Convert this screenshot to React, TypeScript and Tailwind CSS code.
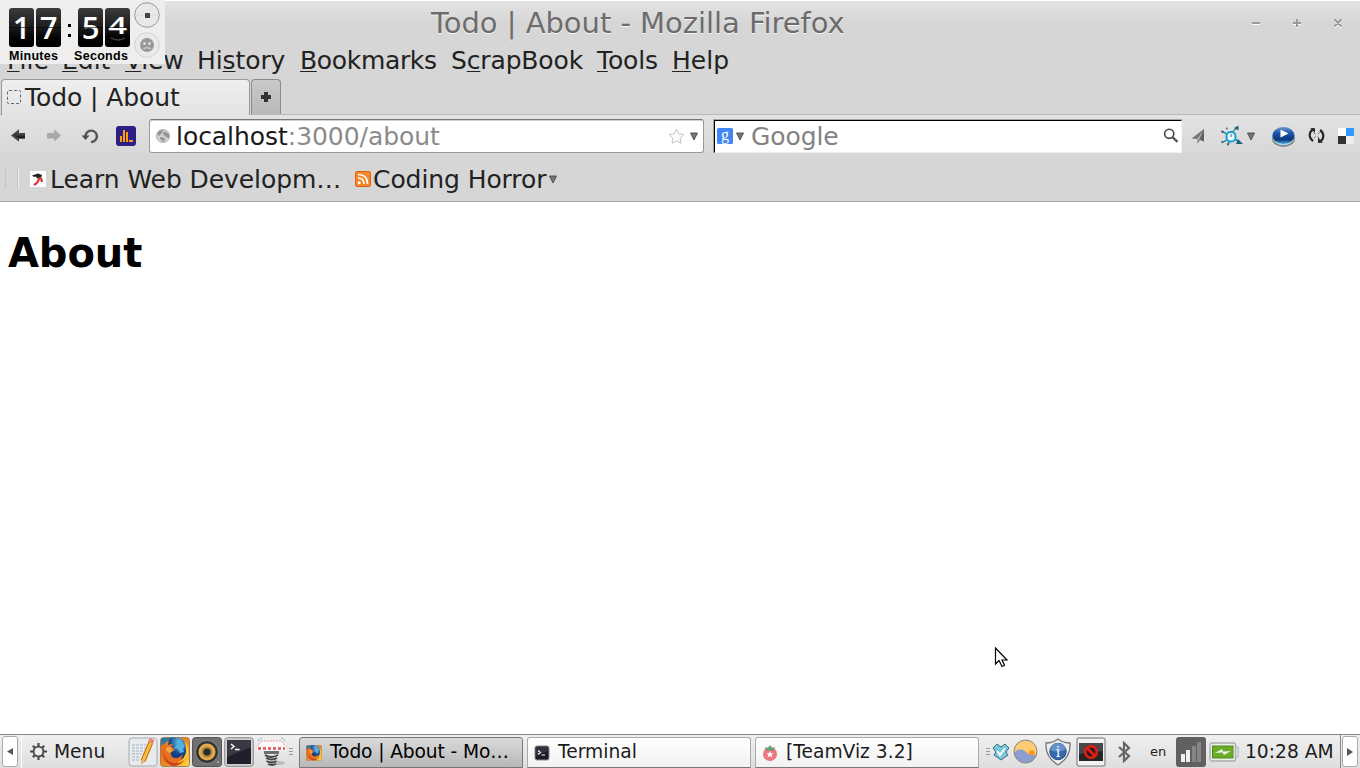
import type { ReactNode } from "react";

function Digit({ value, flipping }: { value: string; flipping?: boolean }) {
  return (
    <div className="relative flex h-[39px] w-[25px] items-center justify-center rounded-[3px] bg-linear-to-b from-[#3c3c3c] via-[#1c1c1c] to-black">
      {flipping ? (
        <span className="-mt-[5px] scale-x-110 scale-y-80 font-['Open_Sans',sans-serif] text-[30px] leading-[38px] font-semibold text-white">
          {value}
        </span>
      ) : (
        <span className="-mt-[1px] font-['Open_Sans',sans-serif] text-[31px] leading-[39px] font-semibold text-white">
          {value}
        </span>
      )}
      {flipping && (
        <svg className="absolute bottom-[4px] left-[4px]" width="18" height="6" viewBox="0 0 18 6">
          <path d="M2 1q7 4 14 0" stroke="#4a4a4a" strokeWidth="1.4" fill="none" />
        </svg>
      )}
      <div className="absolute inset-x-0 top-[19px] h-px bg-black/60" />
    </div>
  );
}

function Timer() {
  return (
    <div className="absolute top-0 left-0 z-10 h-[64px] w-[165px] bg-[#eeeeee]">
      <div className="flex pt-[8px] pl-[9px]">
        <div className="flex gap-[2px]">
          <Digit value="1" />
          <Digit value="7" />
        </div>
        <div className="flex w-[17px] flex-col items-center gap-[7px] pt-[16px]">
          <i className="h-[3px] w-[3px] bg-black" />
          <i className="h-[3px] w-[3px] bg-black" />
        </div>
        <div className="flex gap-[2px]">
          <Digit value="5" />
          <Digit value="4" flipping />
        </div>
      </div>
      <div className="flex pl-[9px] font-['Liberation_Sans',sans-serif] text-[12.5px] leading-[18px] font-bold tracking-[0.3px] text-black">
        <span className="w-[65px]">Minutes</span>
        <span>Seconds</span>
      </div>
      <svg className="absolute top-0 left-[133px]" width="28" height="60" viewBox="0 0 28 60">
        <circle cx="14" cy="15" r="12.3" fill="#e8e8e8" stroke="#999" />
        <path d="M2 15.500H26" stroke="#ddd" />
        <rect x="12" y="13" width="5" height="5" fill="#444" />
        <circle cx="14" cy="45" r="12.3" fill="#eaeaea" stroke="#d3d3d3" />
        <circle cx="14" cy="45" r="7" fill="#999" />
        <path d="M10.500 48.500q3.500-1.500 7 0" stroke="#e0e0e0" strokeWidth="1.100" fill="none" />
        <circle cx="11.500" cy="43.500" r="1.200" fill="#eee" />
        <circle cx="16.500" cy="43.500" r="1.200" fill="#eee" />
      </svg>
    </div>
  );
}

function MenuItem({ pre = "", hot, post, className }: { pre?: string; hot: string; post: string; className: string }) {
  return (
    <span className={className}>
      {pre}
      <span className="underline decoration-[#222] decoration-1 underline-offset-[2px] [text-decoration-skip-ink:none]">{hot}</span>
      {post}
    </span>
  );
}

function Caret({ className }: { className: string }) {
  return (
    <svg className={className} width="8" height="9" viewBox="0 0 8 9">
      <path d="M.5 1h7L4 8z" fill="#777" stroke="#484848" strokeWidth=".9" />
    </svg>
  );
}

function FirefoxIcon({ size }: { size: number }) {
  return (
    <svg width={size} height={size} viewBox="0 0 30 30">
      <defs>
        <linearGradient id="foxTile" x2="1" y2="1">
          <stop stopColor="#eb7128" />
          <stop offset=".55" stopColor="#ef8a23" />
          <stop offset="1" stopColor="#ffe03c" />
        </linearGradient>
        <radialGradient id="foxGlobe" cx=".6" cy=".2">
          <stop stopColor="#65bfea" />
          <stop offset="1" stopColor="#123e83" />
        </radialGradient>
      </defs>
      <rect x=".5" y=".5" width="29" height="29" rx="3" fill="url(#foxTile)" stroke="#a77c55" />
      <path d="M9 1q7-2 13 1 6 4 5 12-1 10-10 11-8 0-10-8z" fill="url(#foxGlobe)" />
      <path d="M1 9V3q0-2 2-2h9Q6 4 4 8z" fill="#277aa6" />
      <path d="M17 4l5 1 3 4-2 3 1 3-4 1-2-4-4-1 3-3z" fill="#57afdf" />
      <path d="M1 10l2-4 2 4q3-3 8-3l-2 3 4 2-4 3q-1 4 3 6 5 1 9-4l-2 6 5-3q-3 8-11 8Q3 28 1 18z" fill="#e76f1e" />
      <path d="M3 14q1 7 7 11 7 3 13-1-3 5-10 5Q4 27 3 14z" fill="#c84226" />
      <path d="M24 4q6 6 4 13-3 8-11 9 9-5 9-12 0-6-2-10z" fill="#ffc52e" />
      <path d="M6 11q3-2 6 0l-2 2 4 0-4 3q-4-1-4-5z" fill="#f8a941" />
    </svg>
  );
}

function TerminalIcon() {
  return (
    <svg width="30" height="30" viewBox="0 0 30 30">
      <rect x=".7" y=".7" width="28.600" height="28.600" rx="3" fill="#d0d0d0" stroke="#8a8a8a" />
      <rect x="3" y="3" width="24" height="24" fill="#211f2b" />
      <path d="M3 3h24v7L3 20z" fill="#3a3843" />
      <path d="M7 7l3 2.500L7 12M11 12.500h4.500" fill="none" stroke="#fff" strokeWidth="1.500" />
    </svg>
  );
}

function SmallTerminalIcon() {
  return (
    <svg width="16" height="16" viewBox="0 0 16 16">
      <rect x="1" y="1" width="14" height="14" rx="2" fill="#1d1a26" stroke="#8c8c8c" />
      <path d="M2 2h12v4L2 11z" fill="#34313f" />
      <path d="M4 5.500l2.500 2L4 9.500M7.500 10H11" fill="none" stroke="#fff" strokeWidth="1.100" />
    </svg>
  );
}

function NavBar() {
  return (
    <div className="flex h-[43px] items-start bg-linear-to-b from-[#e3e3e3] to-[#d6d6d6] pt-[4px]">
      <div className="flex h-[34px] w-[149px] items-center">
        <svg className="-mt-[1px] ml-[11px]" width="15" height="14" viewBox="0 0 15 14">
          <path d="M0 6.500L8 .3v3.700h6v5.500H8v3.200z" fill="#444" />
          <path d="M8 9.500h6v-3H3z" fill="#222" />
        </svg>
        <svg className="-mt-[1px] ml-[20px]" width="16" height="14" viewBox="0 0 16 14">
          <path d="M15 6.500L8 .3v3.700H1v5.500h7v3.200z" fill="#a9a9a9" />
        </svg>
        <svg className="ml-[19px]" width="18" height="16" viewBox="0 0 18 16">
          <path d="M4.500 8.500A5.700 5.700 0 1 1 10 14" fill="none" stroke="#555" strokeWidth="2.400" />
          <path d="M.5 7.500h8L4.500 12z" fill="#4d4d4d" />
        </svg>
        <svg className="ml-[17px]" width="20" height="20" viewBox="0 0 20 20">
          <rect width="20" height="20" rx="3" fill="#2d1e87" />
          <path d="M4 10h2v6H4zM7 4h2v12H7zM10 6h2v10h-2zM13 14h4v2h-4z" fill="#ff9f00" />
        </svg>
      </div>
      <div className="flex h-[34px] w-[555px] items-center rounded-[3px] border border-[#999] border-t-[#777] bg-white text-[25px] shadow-[inset_0_1px_0_#d0d0d0]">
        <svg className="ml-[6px]" width="14" height="14" viewBox="0 0 14 14">
          <circle cx="7" cy="7" r="6.600" fill="#cfcfcf" stroke="#aaa" strokeWidth=".8" />
          <path d="M1 5q2-4 6-4l-1 3-3 3zM8 2l5 3v4l-3-1-3-3zM4 8l5 1-1 4-4-3z" fill="#959595" />
        </svg>
        <span className="ml-[6px] tracking-[-0.05px] text-[#1a1a1a]">localhost</span>
        <span className="tracking-[-0.05px] text-[#8b8b8b]">:3000/about</span>
        <svg className="ml-auto" width="17" height="17" viewBox="0 0 17 17">
          <path
            d="M8.500 1.200l2.200 4.600 5.100.7-3.700 3.600.9 5.200-4.500-2.500L4 15.300l.9-5.200-3.700-3.600 5.100-.7z"
            fill="#fff"
            stroke="#c4c4c4"
            strokeLinejoin="round"
          />
        </svg>
        <Caret className="mr-[5px] ml-[5px]" />
      </div>
      <div className="ml-[9px] flex h-[34px] w-[469px] border-t border-l border-[#a5a5a5]">
        <div className="flex grow items-center border-t border-r border-b border-l border-t-black border-r-[#f4f4f4] border-b-[#f0f0f0] border-l-black bg-white pb-px">
          <svg className="ml-[2px]" width="16" height="16" viewBox="0 0 16 16">
            <rect width="16" height="16" rx="1.500" fill="#4285f4" />
            <text x="8" y="11.500" textAnchor="middle" className="fill-white font-['Liberation_Serif',serif] text-[16px]">
              g
            </text>
          </svg>
          <Caret className="ml-[3px]" />
          <span className="mt-px ml-[7px] text-[25px] tracking-[-0.1px] text-[#828282]">Google</span>
          <svg className="mr-[2px] ml-auto" width="16" height="16" viewBox="0 0 16 16">
            <circle cx="6.200" cy="5.800" r="4.600" fill="none" stroke="#444" strokeWidth="1.600" />
            <path d="M9.500 9.200l5 4.600" stroke="#555" strokeWidth="2.400" />
          </svg>
        </div>
      </div>
      <div className="flex h-[34px] items-center">
        <svg className="ml-[9px]" width="15" height="15" viewBox="0 0 15 15">
          <path d="M13 0v12.500l-4-1.500-2.500 3.500L6 10 .5 9.500z" fill="#777" />
          <path d="M12.500 1.500L6.500 10v3z" fill="#c4c4c4" />
          <path d="M13 .5v12L9 10.500z" fill="#606060" />
        </svg>
        <svg className="ml-[14px]" width="24" height="22" viewBox="0 0 24 22">
          <path d="M9 10L3 7M9 14l-6 3M10 14l-2 6M12 8l4-5M15 14l4 3" stroke="#176b83" strokeWidth="1.200" />
          <path d="M1 5.500l3 .5-2 2.500zM6 2.500l2 .5-1.500 2zM1 16l3 .5-2 2zM6.500 18.500h2.500l-1 2.500zM14 3l4.500-2.500v5zM18 14l5 5h-7z" fill="#17647b" />
          <rect x="6.500" y="7" width="9" height="9.500" rx="4" fill="#e8faff" stroke="#189fd0" strokeWidth="2" />
          <path d="M11.200 9v3" stroke="#666" />
        </svg>
        <Caret className="ml-[3px]" />
        <svg className="ml-[16px]" width="26" height="23" viewBox="0 0 26 23">
          <defs>
            <linearGradient id="playBlue" x2="0" y2="1">
              <stop stopColor="#7495c5" />
              <stop offset=".35" stopColor="#1c55aa" />
              <stop offset=".75" stopColor="#0c357c" />
              <stop offset="1" stopColor="#50b0e4" />
            </linearGradient>
          </defs>
          <ellipse cx="12.500" cy="13.500" rx="11.500" ry="8.500" fill="#858585" />
          <ellipse cx="12.500" cy="11.500" rx="11" ry="8.800" fill="#a9d8ed" />
          <ellipse cx="12.500" cy="10.500" rx="11" ry="8.500" fill="url(#playBlue)" />
          <path d="M9.500 4.500l8 4-8 4z" fill="#fff" />
        </svg>
        <svg className="-mt-px ml-[11px]" width="17" height="17" viewBox="0 0 17 17">
          <path d="M6 2Q1.500 4 1.700 8.500 2 12 5 14M11 15q4.500-2 4.300-6.500Q15 5 12 3" fill="none" stroke="#252525" strokeWidth="2.200" />
          <path d="M2 1.200h5v4.500zM10 15.800v-5l5 5z" fill="#252525" />
          <path d="M5.500 5.500l2 2M9.500 9.500l2 2M6 11l1.500-1.500M10 7l1.500-1.500" stroke="#666" />
        </svg>
        <svg className="ml-[13px]" width="16" height="16" viewBox="0 0 16 16">
          <path d="M0 0h8v8H0z" fill="#fff" />
          <path d="M8 0h8v8H8z" fill="#3399ff" />
          <path d="M0 8h8v8H0z" fill="#333" />
          <path d="M8 8h8v8H8z" fill="#eee" />
        </svg>
      </div>
    </div>
  );
}

function Bookmarks() {
  return (
    <div className="flex h-[44px] items-center border-b border-[#a7a7a7] bg-[#d6d6d6] text-[25px] text-[#222]">
      <div className="-mt-[2px] ml-[5px] h-[21px] w-[13px] border-x border-[#c4c4c4] shadow-[1px_0_0_#eee]" />
      <svg className="-mt-px ml-[12px]" width="16" height="16" viewBox="0 0 16 16">
        <path d="M0 0h16v16H0z" fill="#fff" />
        <path d="M2 4.500L8 2.500l4 1.500-1 3-4 .5-1-2-2 .5z" fill="#222" />
        <path d="M4 14q5-3 5-7M11 7l1 4" fill="none" stroke="#d52e38" strokeWidth="2.200" />
        <path d="M8 6.500h3" stroke="#684e26" />
      </svg>
      <span className="ml-[4px] w-[305px] tracking-[-0.07px]">Learn Web Developm…</span>
      <svg className="-mt-px" width="16" height="16" viewBox="0 0 16 16">
        <rect x=".5" y=".5" width="15" height="15" rx="1.500" fill="#f6882c" stroke="#d96310" />
        <circle cx="4.200" cy="11.800" r="1.500" fill="#fff" />
        <path d="M3 7q6 0 6 6M3 3.500q9.500 0 9.500 9.500" fill="none" stroke="#fff" strokeWidth="1.600" />
      </svg>
      <span className="ml-[2px] w-[176px] tracking-[-0.08px]">Coding Horror</span>
      <Caret className="" />
    </div>
  );
}

function Task({ icon, children, active }: { icon: ReactNode; children: ReactNode; active?: boolean }) {
  return (
    <div
      className={
        active
          ? "flex h-[31px] w-[224px] items-center rounded-t-[3px] border border-[#777] bg-linear-to-b from-[#dadada] to-[#b8b8b8] text-black"
          : "flex h-[31px] w-[224px] items-center rounded-t-[3px] border border-[#aaa] border-b-[#777] bg-linear-to-b from-white to-[#f2f2f2] text-[#1c1c1c]"
      }
    >
      <span className="ml-[6px] flex w-[24px]">{icon}</span>
      <span>{children}</span>
    </div>
  );
}

function Grip({ className }: { className: string }) {
  return (
    <div className={className}>
      <i className="h-px bg-[#999]" />
      <i className="h-px bg-[#999]" />
      <i className="h-px bg-[#999]" />
    </div>
  );
}

function Launchers() {
  return (
    <div className="flex w-[161px] items-center gap-[2px]">
      <svg width="30" height="30" viewBox="0 0 30 30">
        <rect x="1" y="1" width="28" height="28" rx="3" fill="#e8ebee" stroke="#aaa" />
        <path d="M4 8h14M4 11h13M4 14h11M4 17h10M4 20h8M4 23h7" stroke="#a3b1c2" strokeDasharray="3 1" />
        <path d="M23 5L15 24" stroke="#b76d1d" strokeWidth="5" />
        <path d="M23 5L15 24" stroke="#ffbd36" strokeWidth="3" />
        <path d="M22.500 6l1.500-4" stroke="#e78572" strokeWidth="5" />
        <path d="M13 28l0-5 4 1.500z" fill="#ddb980" />
      </svg>
      <FirefoxIcon size={30} />
      <svg width="30" height="30" viewBox="0 0 30 30">
        <rect x=".5" y=".5" width="29" height="29" rx="3" fill="#707070" stroke="#555" />
        <circle cx="15" cy="15" r="11.500" fill="#333" stroke="#8a8a8a" />
        <circle cx="15" cy="15" r="8.500" fill="#e0ab48" />
        <circle cx="15" cy="15" r="5.500" fill="#a88445" />
        <circle cx="15" cy="15" r="3.500" fill="#282828" />
        <circle cx="26" cy="25" r="1" fill="#7bdc78" />
      </svg>
      <TerminalIcon />
      <svg width="31" height="30" viewBox="0 0 31 30">
        <ellipse cx="21" cy="26" rx="8" ry="2" fill="#bbb" />
        <path d="M5 4h21l4 6H1z" fill="#fafafa" stroke="#e49a9a" strokeDasharray="2 1" />
        <path d="M1 9.500h29v4H1z" fill="#fff" />
        <path d="M2 11.500h27" stroke="#e05050" strokeWidth="2.400" strokeDasharray="3 2" />
        <path d="M2 4q1-3 5-3M29 4q-1-3-5-3" fill="none" stroke="#68a7da" strokeDasharray="2 1" />
        <path d="M8 14h15v3H8z" fill="#6d6d6d" />
        <path d="M9 18q6 4 13 0M10 21q6 3 11 0M10.500 24q5 3 10 0M12 27q4 2 8 0" fill="none" stroke="#444" strokeWidth="1.900" />
      </svg>
    </div>
  );
}

function Tray() {
  return (
    <div className="flex items-center">
      <svg className="ml-[2px]" width="18" height="18" viewBox="0 0 18 18">
        <path d="M5 1l4 3 4-3 4 4-3 4 2 3-7 5-7-5 2-3-3-4z" fill="#75c8dd" stroke="#426b79" />
        <path d="M5 8l3 4 5-7" stroke="#fff" strokeWidth="2" fill="none" />
      </svg>
      <svg className="ml-[3px]" width="25" height="25" viewBox="0 0 25 25">
        <circle cx="12.500" cy="12.500" r="11.500" fill="#ffcb73" />
        <path d="M15 13q4-3 6-1l1 4-4 1z" fill="#ff9417" />
        <path d="M1 14q6-7 12-1 4 4 10 3-3 8-10.500 8Q3 23 1 14z" fill="#8a9fce" />
        <circle cx="12.500" cy="12.500" r="11.500" fill="none" stroke="#858585" />
      </svg>
      <svg className="ml-[6px]" width="28" height="28" viewBox="0 0 28 28">
        <path d="M14 1q5 4 12 4 1 14-12 22Q1 19 2 5q7 0 12-4z" fill="#eee" stroke="#777" strokeWidth="1.300" />
        <circle cx="14" cy="13.500" r="8.200" fill="#3569ad" stroke="#234e89" />
        <path d="M6 12q8 4 16-1-2-6-8-6t-8 7z" fill="#6792c9" />
        <text x="14" y="19" textAnchor="middle" className="fill-white font-['DejaVu_Serif',serif] text-[14px]">
          i
        </text>
      </svg>
      <svg className="ml-[4px]" width="30" height="30" viewBox="0 0 30 30">
        <rect x="1" y="1" width="28" height="28" rx="2" fill="#f2f2f2" stroke="#999" strokeWidth="1.500" />
        <rect x="3" y="6" width="24" height="18" fill="#252525" />
        <path d="M3 6h24v8L3 17z" fill="#484848" />
        <circle cx="15" cy="15" r="5.800" fill="#251f1f" stroke="#e91b12" strokeWidth="2.600" />
        <path d="M11 11l8 8" stroke="#e91b12" strokeWidth="2.600" />
      </svg>
      <svg className="ml-[11px]" width="14" height="22" viewBox="0 0 14 22">
        <path d="M2 6l10 9-5 5V2l5 5-10 9" fill="none" stroke="#666" strokeWidth="2.200" />
      </svg>
      <span className="ml-[19px] w-[26px] text-[13px]">en</span>
      <svg width="30" height="30" viewBox="0 0 30 30">
        <rect width="30" height="30" rx="3" fill="#606060" />
        <path d="M5 17h4v8H5zM10 13h4v12h-4z" fill="#f0f0f0" />
        <path d="M16 9h4v16h-4zM21 5h4v20h-4z" fill="#858585" />
      </svg>
      <svg className="ml-[3px]" width="31" height="20" viewBox="0 0 31 20">
        <path d="M26 5h3v10h-3z" fill="#eee" stroke="#aaa" />
        <rect x="1" y="1" width="25.500" height="18" rx="2" fill="#eee" stroke="#aaa" strokeWidth="1.300" />
        <rect x="3.500" y="4" width="20.500" height="12" fill="#6aae24" stroke="#548b20" />
        <path d="M6 11l7-4 1 2.500 8-.5-7 4-1.500-2.500z" fill="#eee" />
      </svg>
      <span className="mt-[2px] ml-[5px] w-[95px]">10:28 AM</span>
    </div>
  );
}

export default function App() {
  return (
    <div className="relative flex h-[768px] w-[1360px] flex-col overflow-hidden bg-[#d6d6d6] font-['DejaVu_Sans',sans-serif] leading-none whitespace-nowrap">
      <Timer />
      <header className="flex h-[46px] items-center border-t border-white bg-linear-to-b from-[#e3e3e3] to-[#d6d6d6] to-50%">
        <div className="-mt-[1px] w-[1251px] pl-[431px] text-[29px] tracking-[-0.03px] text-[#6c6c6c] [text-shadow:0_1px_0_#f5f5f5]">
          Todo | About - Mozilla Firefox
        </div>
        <svg className="-mt-[2px]" width="94" height="12" viewBox="0 0 94 12">
          <path d="M1 7h8M42 7h8M46 3v8M83.500 3.500l7 7M90.500 3.500l-7 7" stroke="#fff" strokeWidth="2" />
          <path d="M1 6h8M42 6h8M46 2v8M83.500 2.500l7 7M90.500 2.500l-7 7" stroke="#999" strokeWidth="2" />
        </svg>
      </header>
      <nav className="flex h-[32px] pl-[7px] text-[25px] leading-[30px] text-[#222]">
        <MenuItem className="w-[55px]" hot="F" post="ile" />
        <MenuItem className="w-[63px]" hot="E" post="dit" />
        <MenuItem className="w-[72px] tracking-[-0.2px]" hot="V" post="iew" />
        <MenuItem className="w-[103px] tracking-[-0.1px]" pre="Hi" hot="s" post="tory" />
        <MenuItem className="w-[151px] tracking-[-0.33px]" hot="B" post="ookmarks" />
        <MenuItem className="w-[146px] tracking-[-0.15px]" pre="S" hot="c" post="rapBook" />
        <MenuItem className="w-[75px] tracking-[-0.15px]" hot="T" post="ools" />
        <MenuItem className="" hot="H" post="elp" />
      </nav>
      <div className="flex h-[37px] items-end border-b border-[#b9b9b9] pl-[1px]">
        <div className="-mb-px flex h-[36px] w-[249px] items-center rounded-t-[4px] border border-b-0 border-[#999] bg-linear-to-b from-[#efefef] to-[#e3e3e3] text-[25px] text-[#222]">
          <span className="-mt-px ml-[5px] h-[14px] w-[14px] rounded-[2px] border border-dashed border-[#666]" />
          <span className="ml-[4px] tracking-[-0.08px]">Todo | About</span>
        </div>
        <div className="ml-[1px] flex h-[35px] w-[30px] items-center justify-center rounded-t-[4px] border border-b-0 border-[#8b8b8b] bg-linear-to-b from-[#c9c9c9] to-[#b9b9b9]">
          <svg width="12" height="12" viewBox="0 0 12 12">
            <path d="M4 1h4v3h3v4H8v3H4V8H1V4h3z" fill="#333" />
          </svg>
        </div>
      </div>
      <NavBar />
      <Bookmarks />
      <main className="relative h-[532px] bg-white pt-[31px] pl-[8px]">
        <h1 className="text-[40px] font-bold tracking-[-0.1px] text-black">About</h1>
        <svg className="absolute top-[445px] left-[994px]" width="15" height="22" viewBox="0 0 15 22">
          <path d="M1.500 1v16l3.500-3.500 3 6 2.500-1.200-2.500-5.300h5z" fill="#fff" stroke="#000" strokeWidth="1.200" />
        </svg>
      </main>
      <footer className="flex h-[34px] items-center border-t border-[#858585] bg-linear-to-b from-[#f0f0f0] to-[#dedede] text-[18.67px] text-[#1c1c1c]">
        <div className="ml-[2px] flex h-[31px] w-[16px] items-center justify-center rounded-[3px] border border-[#aaa] bg-white">
          <svg width="6" height="7" viewBox="0 0 6 7">
            <path d="M6 0v7L0 3.500z" fill="#555" />
          </svg>
        </div>
        <div className="ml-[3px] h-full w-px bg-white" />
        <svg className="ml-[8px]" width="17" height="17" viewBox="0 0 17 17">
          <path d="M8.500 0v17M0 8.500h17M2.800 2.800l11.400 11.400M14.200 2.800L2.800 14.200" stroke="#4a4a4a" strokeWidth="2.200" />
          <circle cx="8.500" cy="8.500" r="4.900" fill="#ededed" stroke="#4a4a4a" strokeWidth="1.900" />
        </svg>
        <span className="mt-[2px] ml-[7px] w-[74px]">Menu</span>
        <Launchers />
        <Grip className="flex w-[4px] flex-col gap-[2px]" />
        <div className="ml-[6px] flex gap-[4px] self-end">
          <Task active icon={<FirefoxIcon size={16} />}>
            <span className="tracking-[-0.12px]">Todo | About - Mo…</span>
          </Task>
          <Task icon={<SmallTerminalIcon />}>Terminal</Task>
          <Task
            icon={
              <svg width="16" height="18" viewBox="0 0 16 18">
                <circle cx="8" cy="10" r="7" fill="#ed7584" />
                <path d="M2.500 3l3.500 1 2-3 2 3 3.500-1-2.500 3.500H5z" fill="#5ba477" />
                <path d="M8 7l1 2.300h2.500l-2 1.700.8 2.500L8 12l-2.300 1.500.8-2.500-2-1.700H7z" fill="#fff" />
              </svg>
            }
          >
            [TeamViz 3.2]
          </Task>
        </div>
        <Grip className="ml-[7px] flex w-[4px] flex-col gap-[2px]" />
        <Tray />
        <div className="h-full w-px bg-[#888]" />
        <div className="ml-[1px] flex h-[31px] w-[16px] items-center justify-center rounded-[3px] border border-[#aaa] bg-white">
          <svg width="6" height="8" viewBox="0 0 6 8">
            <path d="M0 0v8l6-4z" fill="#555" />
          </svg>
        </div>
      </footer>
    </div>
  );
}
